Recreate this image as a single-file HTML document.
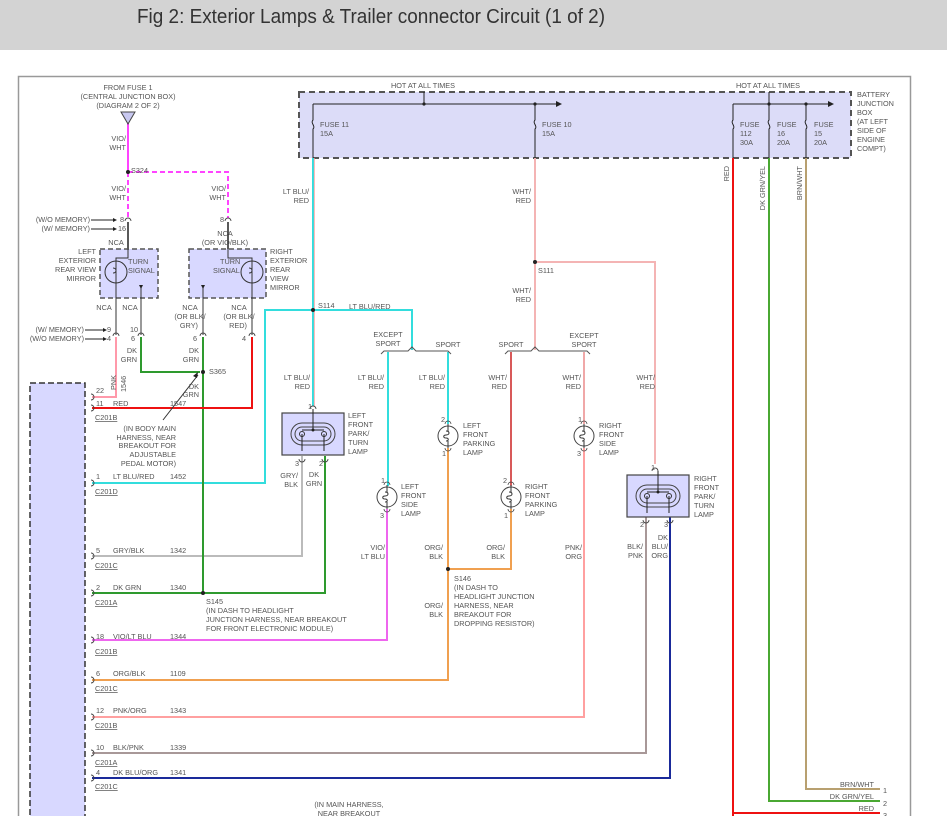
<!DOCTYPE html>
<html><head><meta charset="utf-8"><style>
html,body{margin:0;padding:0;background:#fff;width:947px;height:835px;overflow:hidden}
svg{display:block}
text{font-family:"Liberation Sans",sans-serif;font-size:7.3px;fill:#555}
.t{font-family:"Liberation Sans",sans-serif;font-size:20px;fill:#333}
.r{text-anchor:end}.m{text-anchor:middle}
.u{text-decoration:underline}
</style></head><body>
<svg width="947" height="835" viewBox="0 0 947 835" xmlns="http://www.w3.org/2000/svg">
<defs>
<g id="bulb"><circle r="10" fill="#fff" stroke="#444" stroke-width="1"/><path d="M0,-12V-5M-2,-5c4,0 4,4 0,4c-3,0 -3,3 0,3c3,0 3,3 0,3M0,5V12" fill="none" stroke="#333" stroke-width="1"/><path d="M-3,-12a3,3 0 0 1 6,0M-3,12a3,3 0 0 0 6,0" fill="none" stroke="#444" stroke-width="0.8"/></g>
<g id="pt"><rect x="-31" y="0" width="62" height="42" fill="#d8d8ff" stroke="#444" stroke-width="1.2"/><rect x="-22" y="10" width="44" height="22" rx="11" fill="none" stroke="#444"/><rect x="-18" y="14" width="36" height="14" rx="7" fill="none" stroke="#444"/><circle cx="-11" cy="21" r="2.5" fill="none" stroke="#333"/><circle cx="11" cy="21" r="2.5" fill="none" stroke="#333"/><path d="M0,-4V17M-11,17H11M-11,21V38M11,21V38" stroke="#222" fill="none"/><circle cx="0" cy="17" r="1.5" fill="#222"/></g>
<g id="cn"><path d="M-3,3a3,3 0 0 1 6,0" fill="none" stroke="#444" stroke-width="0.9"/></g>
</defs>
<rect x="0" y="0" width="947" height="50" fill="#d3d3d3"/>
<text class="t" x="137" y="23" textLength="468" lengthAdjust="spacingAndGlyphs">Fig 2: Exterior Lamps &amp; Trailer connector Circuit (1 of 2)</text>
<path d="M18.5,835V76.5H910.5V835" fill="none" stroke="#999" stroke-width="1.5"/>

<!-- battery junction box -->
<rect x="299" y="92" width="552" height="66" fill="#dcdcf8" stroke="#555" stroke-width="2" stroke-dasharray="6,4"/>
<path d="M313,104H556M424,92V104M733,104H828M769,92V104" stroke="#222" fill="none"/>
<path d="M556,101l6,3l-6,3zM828,101l6,3l-6,3z" fill="#222"/>
<g stroke="#222" fill="none">
<path d="M313,104V120c-3,3 3,6 0,9V158"/><path d="M535,104V120c-3,3 3,6 0,9V158"/>
<path d="M733,104V120c-3,3 3,6 0,9V158"/><path d="M769,104V120c-3,3 3,6 0,9V158"/><path d="M806,104V120c-3,3 3,6 0,9V158"/>
</g>
<g fill="#222"><circle cx="424" cy="104" r="1.6"/><circle cx="535" cy="104" r="1.6"/><circle cx="769" cy="104" r="1.6"/><circle cx="806" cy="104" r="1.6"/></g>
<text class="m" x="423" y="88">HOT AT ALL TIMES</text><text class="m" x="768" y="88">HOT AT ALL TIMES</text>
<text x="320" y="127">FUSE 11</text><text x="320" y="136">15A</text>
<text x="542" y="127">FUSE 10</text><text x="542" y="136">15A</text>
<text x="740" y="127">FUSE</text><text x="740" y="136">112</text><text x="740" y="145">30A</text>
<text x="777" y="127">FUSE</text><text x="777" y="136">16</text><text x="777" y="145">20A</text>
<text x="814" y="127">FUSE</text><text x="814" y="136">15</text><text x="814" y="145">20A</text>
<text x="857" y="97">BATTERY</text><text x="857" y="106">JUNCTION</text><text x="857" y="115">BOX</text><text x="857" y="124">(AT LEFT</text><text x="857" y="133">SIDE OF</text><text x="857" y="142">ENGINE</text><text x="857" y="151">COMPT)</text>
<text class="r" transform="translate(729,166) rotate(-90)">RED</text>
<text class="r" transform="translate(765,166) rotate(-90)">DK GRN/YEL</text>
<text class="r" transform="translate(802,166) rotate(-90)">BRN/WHT</text>

<!-- right side long wires -->
<path d="M733,158V835" stroke="#ee1111" stroke-width="2" fill="none"/>
<path d="M769,158V801H880" stroke="#4aa832" stroke-width="2" fill="none"/>
<path d="M806,158V789H880" stroke="#b8a070" stroke-width="2" fill="none"/>
<path d="M733,813H880" stroke="#ee1111" stroke-width="2"/>
<text class="r" x="874" y="787">BRN/WHT</text><text x="883" y="793">1</text>
<text class="r" x="874" y="799">DK GRN/YEL</text><text x="883" y="806">2</text>
<text class="r" x="874" y="811">RED</text><text x="883" y="818">3</text>

<!-- wires -->
<g fill="none" stroke-width="2">
<path d="M313,158V406" stroke="#33dddd"/><path d="M314.3,158V406" stroke="#ff9999" stroke-width="0.8"/>
<path d="M313,310H412V350M313,310H265V483H92" stroke="#33dddd"/>
<path d="M535,158V350M535,262H655V464" stroke="#f4b4b4"/>
<path d="M388,352V486M448,352V424" stroke="#33dddd"/>
<path d="M511,352V486" stroke="#cc2222" stroke-width="1.5"/>
<path d="M584,352V424" stroke="#f0a8a8"/>
<path d="M387,509V640H92" stroke="#ee66ee"/>
<path d="M448,448V680H92M448,569H511V509" stroke="#f0a050"/>
<path d="M584,448V717H92" stroke="#ffa0a0"/>
<path d="M646,516V753H92" stroke="#a89898"/>
<path d="M670,516V778H92" stroke="#1a2a9a"/>
<path d="M302,456V556H92" stroke="#bbbbbb"/>
<path d="M325,456V593H92" stroke="#2e9a2e"/>
<path d="M203,337V593" stroke="#2e9a2e"/>
<path d="M141,337V372H200" stroke="#2e9a2e"/>
<path d="M116,337V397H92" stroke="#ff99aa"/>
<path d="M252,337V408H92" stroke="#ee1111"/>
<path d="M128,122V172" stroke="#ff44ff"/>
<path d="M128,172V218M128,172H228V218" stroke="#ff44ff" stroke-dasharray="5,3"/>
</g>
<g fill="#222"><circle cx="313" cy="310" r="2"/><circle cx="535" cy="262" r="2"/><circle cx="448" cy="569" r="2"/><circle cx="203" cy="593" r="2"/><circle cx="203" cy="372" r="2"/><circle cx="128" cy="172" r="2"/></g>
<!-- brackets -->
<path d="M381,354l3,-3H408l4,-4l4,4H448l3,3M505,354l3,-3H531l4,-4l4,4H587l3,3" fill="none" stroke="#555"/>
<text class="m" x="388" y="337">EXCEPT</text><text class="m" x="388" y="346">SPORT</text><text class="m" x="448" y="347">SPORT</text>
<text class="m" x="511" y="347">SPORT</text><text class="m" x="584" y="338">EXCEPT</text><text class="m" x="584" y="347">SPORT</text>

<!-- fuse1 triangle -->
<path d="M121,112H135L128,124Z" fill="#c8c8f0" stroke="#444"/>
<text class="m" x="128" y="90">FROM FUSE 1</text><text class="m" x="128" y="99">(CENTRAL JUNCTION BOX)</text><text class="m" x="128" y="108">(DIAGRAM 2 OF 2)</text>
<text class="r" x="126" y="141">VIO/</text><text class="r" x="126" y="150">WHT</text>
<text x="131" y="173">S324</text>
<text class="r" x="126" y="191">VIO/</text><text class="r" x="126" y="200">WHT</text>
<text class="r" x="226" y="191">VIO/</text><text class="r" x="226" y="200">WHT</text>
<path d="M128,222V249M228,222V249" stroke="#222" stroke-width="1.5"/>
<use href="#cn" x="128" y="218"/><use href="#cn" x="228" y="218"/>
<text x="120" y="222">8</text><text x="118" y="231">16</text><text x="220" y="222">8</text>
<text class="r" x="90" y="222">(W/O MEMORY)</text><text class="r" x="90" y="231">(W/ MEMORY)</text>
<path d="M91,220H113M91,229H113" stroke="#222"/><path d="M113,218l4,2l-4,2zM113,227l4,2l-4,2z" fill="#222"/>
<text class="m" x="116" y="245">NCA</text><text class="m" x="225" y="236">NCA</text><text class="m" x="225" y="245">(OR VIO/BLK)</text>
<rect x="100" y="249" width="58" height="49" fill="#d8d8ff" stroke="#555" stroke-width="1.5" stroke-dasharray="5,3"/>
<rect x="189" y="249" width="77" height="49" fill="#d8d8ff" stroke="#555" stroke-width="1.5" stroke-dasharray="5,3"/>
<g stroke="#333" fill="none"><circle cx="116" cy="272" r="11"/><circle cx="252" cy="272" r="11"/>
<path d="M128,249V258H116V335M113,268c4,0 4,5 0,5M141,287V335M228,249V258H252V335M249,268c4,0 4,5 0,5M203,287V335"/></g>
<path d="M139,285h4l-2,4zM201,285h4l-2,4z" fill="#222"/>
<text class="r" x="96" y="254">LEFT</text><text class="r" x="96" y="263">EXTERIOR</text><text class="r" x="96" y="272">REAR VIEW</text><text class="r" x="96" y="281">MIRROR</text>
<text x="128" y="264">TURN</text><text x="128" y="273">SIGNAL</text>
<text x="220" y="264">TURN</text><text x="213" y="273">SIGNAL</text>
<text x="270" y="254">RIGHT</text><text x="270" y="263">EXTERIOR</text><text x="270" y="272">REAR</text><text x="270" y="281">VIEW</text><text x="270" y="290">MIRROR</text>
<text class="m" x="104" y="310">NCA</text><text class="m" x="130" y="310">NCA</text>
<text class="m" x="190" y="310">NCA</text><text class="m" x="190" y="319">(OR BLK/</text><text class="r" x="198" y="328">GRY)</text>
<text class="m" x="239" y="310">NCA</text><text class="m" x="239" y="319">(OR BLK/</text><text class="r" x="247" y="328">RED)</text>
<use href="#cn" x="116" y="333"/><use href="#cn" x="141" y="333"/><use href="#cn" x="203" y="333"/><use href="#cn" x="252" y="333"/>
<text class="r" x="84" y="332">(W/ MEMORY)</text><text class="r" x="84" y="341">(W/O MEMORY)</text>
<path d="M85,330H103M85,339H103" stroke="#222"/><path d="M103,328l4,2l-4,2zM103,337l4,2l-4,2z" fill="#222"/>
<text x="107" y="332">9</text><text x="107" y="341">4</text><text x="130" y="332">10</text><text x="131" y="341">6</text><text x="193" y="341">6</text><text x="242" y="341">4</text>
<text class="r" x="137" y="353">DK</text><text class="r" x="137" y="362">GRN</text>
<text class="r" x="199" y="353">DK</text><text class="r" x="199" y="362">GRN</text>
<text x="209" y="374">S365</text>
<text class="r" x="199" y="389">DK</text><text class="r" x="199" y="397">GRN</text>
<text transform="translate(116,390) rotate(-90)">PNK</text><text transform="translate(126,392) rotate(-90)">1546</text>
<path d="M163,420L198,375" stroke="#333"/><path d="M198,372l-1,6l-4,-2z" fill="#222"/>
<text class="r" x="176" y="431">(IN BODY MAIN</text><text class="r" x="176" y="440">HARNESS, NEAR</text><text class="r" x="176" y="448">BREAKOUT FOR</text><text class="r" x="176" y="457">ADJUSTABLE</text><text class="r" x="176" y="466">PEDAL MOTOR)</text>

<!-- left connector box -->
<rect x="30" y="383" width="55" height="440" fill="#d8d8ff" stroke="#333" stroke-width="1.5" stroke-dasharray="6,3"/>
<g fill="none" stroke="#444" stroke-width="0.9">
<path d="M91,394a3,3 0 0 1 0,6M91,405a3,3 0 0 1 0,6M91,480a3,3 0 0 1 0,6M91,553a3,3 0 0 1 0,6M91,590a3,3 0 0 1 0,6M91,637a3,3 0 0 1 0,6M91,677a3,3 0 0 1 0,6M91,714a3,3 0 0 1 0,6M91,750a3,3 0 0 1 0,6M91,775a3,3 0 0 1 0,6"/></g>
<text x="96" y="393">22</text><text x="96" y="406">11</text><text x="113" y="406">RED</text><text x="170" y="406">1547</text><text class="u" x="95" y="420">C201B</text>
<text x="96" y="479">1</text><text x="113" y="479">LT BLU/RED</text><text x="170" y="479">1452</text><text class="u" x="95" y="494">C201D</text>
<text x="96" y="553">5</text><text x="113" y="553">GRY/BLK</text><text x="170" y="553">1342</text><text class="u" x="95" y="568">C201C</text>
<text x="96" y="590">2</text><text x="113" y="590">DK GRN</text><text x="170" y="590">1340</text><text class="u" x="95" y="605">C201A</text>
<text x="96" y="639">18</text><text x="113" y="639">VIO/LT BLU</text><text x="170" y="639">1344</text><text class="u" x="95" y="654">C201B</text>
<text x="96" y="676">6</text><text x="113" y="676">ORG/BLK</text><text x="170" y="676">1109</text><text class="u" x="95" y="691">C201C</text>
<text x="96" y="713">12</text><text x="113" y="713">PNK/ORG</text><text x="170" y="713">1343</text><text class="u" x="95" y="728">C201B</text>
<text x="96" y="750">10</text><text x="113" y="750">BLK/PNK</text><text x="170" y="750">1339</text><text class="u" x="95" y="765">C201A</text>
<text x="96" y="775">4</text><text x="113" y="775">DK BLU/ORG</text><text x="170" y="775">1341</text><text class="u" x="95" y="789">C201C</text>
<text class="m" x="349" y="807">(IN MAIN HARNESS,</text><text class="m" x="349" y="816">NEAR BREAKOUT</text>
<text x="206" y="604">S145</text><text x="206" y="613">(IN DASH TO HEADLIGHT</text><text x="206" y="622">JUNCTION HARNESS, NEAR BREAKOUT</text><text x="206" y="631">FOR FRONT ELECTRONIC MODULE)</text>

<text class="r" x="309" y="194">LT BLU/</text><text class="r" x="309" y="203">RED</text>
<text class="r" x="531" y="194">WHT/</text><text class="r" x="531" y="203">RED</text>
<text x="538" y="273">S111</text>
<text class="r" x="531" y="293">WHT/</text><text class="r" x="531" y="302">RED</text>
<text x="318" y="308">S114</text><text x="349" y="309">LT BLU/RED</text>
<text class="r" x="310" y="380">LT BLU/</text><text class="r" x="310" y="389">RED</text>
<text class="r" x="384" y="380">LT BLU/</text><text class="r" x="384" y="389">RED</text>
<text class="r" x="445" y="380">LT BLU/</text><text class="r" x="445" y="389">RED</text>
<text class="r" x="507" y="380">WHT/</text><text class="r" x="507" y="389">RED</text>
<text class="r" x="581" y="380">WHT/</text><text class="r" x="581" y="389">RED</text>
<text class="r" x="655" y="380">WHT/</text><text class="r" x="655" y="389">RED</text>

<use href="#pt" x="313" y="413"/><use href="#cn" x="313" y="406"/>
<path d="M299,459a3,3 0 0 0 6,0M322,459a3,3 0 0 0 6,0" fill="none" stroke="#444" stroke-width="0.9"/>
<text x="308" y="409">1</text><text x="295" y="466">3</text><text x="319" y="466">2</text>
<text x="348" y="418">LEFT</text><text x="348" y="427">FRONT</text><text x="348" y="436">PARK/</text><text x="348" y="445">TURN</text><text x="348" y="454">LAMP</text>
<text class="r" x="298" y="478">GRY/</text><text class="r" x="298" y="487">BLK</text><text class="m" x="314" y="477">DK</text><text class="m" x="314" y="486">GRN</text>

<use href="#pt" x="658" y="475"/><use href="#cn" x="655" y="468"/>
<path d="M643,520a3,3 0 0 0 6,0M667,520a3,3 0 0 0 6,0" fill="none" stroke="#444" stroke-width="0.9"/>
<text x="651" y="470">1</text><text x="640" y="527">2</text><text x="664" y="527">3</text>
<text x="694" y="481">RIGHT</text><text x="694" y="490">FRONT</text><text x="694" y="499">PARK/</text><text x="694" y="508">TURN</text><text x="694" y="517">LAMP</text>
<text class="r" x="643" y="549">BLK/</text><text class="r" x="643" y="558">PNK</text>
<text class="r" x="668" y="540">DK</text><text class="r" x="668" y="549">BLU/</text><text class="r" x="668" y="558">ORG</text>

<use href="#bulb" x="448" y="436"/><text x="441" y="422">2</text><text x="442" y="456">1</text>
<text x="463" y="428">LEFT</text><text x="463" y="437">FRONT</text><text x="463" y="446">PARKING</text><text x="463" y="455">LAMP</text>
<use href="#bulb" x="584" y="436"/><text x="578" y="422">1</text><text x="577" y="456">3</text>
<text x="599" y="428">RIGHT</text><text x="599" y="437">FRONT</text><text x="599" y="446">SIDE</text><text x="599" y="455">LAMP</text>
<use href="#bulb" x="387" y="497"/><text x="381" y="483">1</text><text x="380" y="518">3</text>
<text x="401" y="489">LEFT</text><text x="401" y="498">FRONT</text><text x="401" y="507">SIDE</text><text x="401" y="516">LAMP</text>
<use href="#bulb" x="511" y="497"/><text x="503" y="483">2</text><text x="504" y="518">1</text>
<text x="525" y="489">RIGHT</text><text x="525" y="498">FRONT</text><text x="525" y="507">PARKING</text><text x="525" y="516">LAMP</text>

<text class="r" x="385" y="550">VIO/</text><text class="r" x="385" y="559">LT BLU</text>
<text class="r" x="443" y="550">ORG/</text><text class="r" x="443" y="559">BLK</text>
<text class="r" x="505" y="550">ORG/</text><text class="r" x="505" y="559">BLK</text>
<text class="r" x="582" y="550">PNK/</text><text class="r" x="582" y="559">ORG</text>
<text x="454" y="581">S146</text><text x="454" y="590">(IN DASH TO</text><text x="454" y="599">HEADLIGHT JUNCTION</text><text x="454" y="608">HARNESS, NEAR</text><text x="454" y="617">BREAKOUT FOR</text><text x="454" y="626">DROPPING RESISTOR)</text>
<text class="r" x="443" y="608">ORG/</text><text class="r" x="443" y="617">BLK</text>

<rect x="0" y="816" width="947" height="20" fill="#fff"/>
</svg>
</body></html>
